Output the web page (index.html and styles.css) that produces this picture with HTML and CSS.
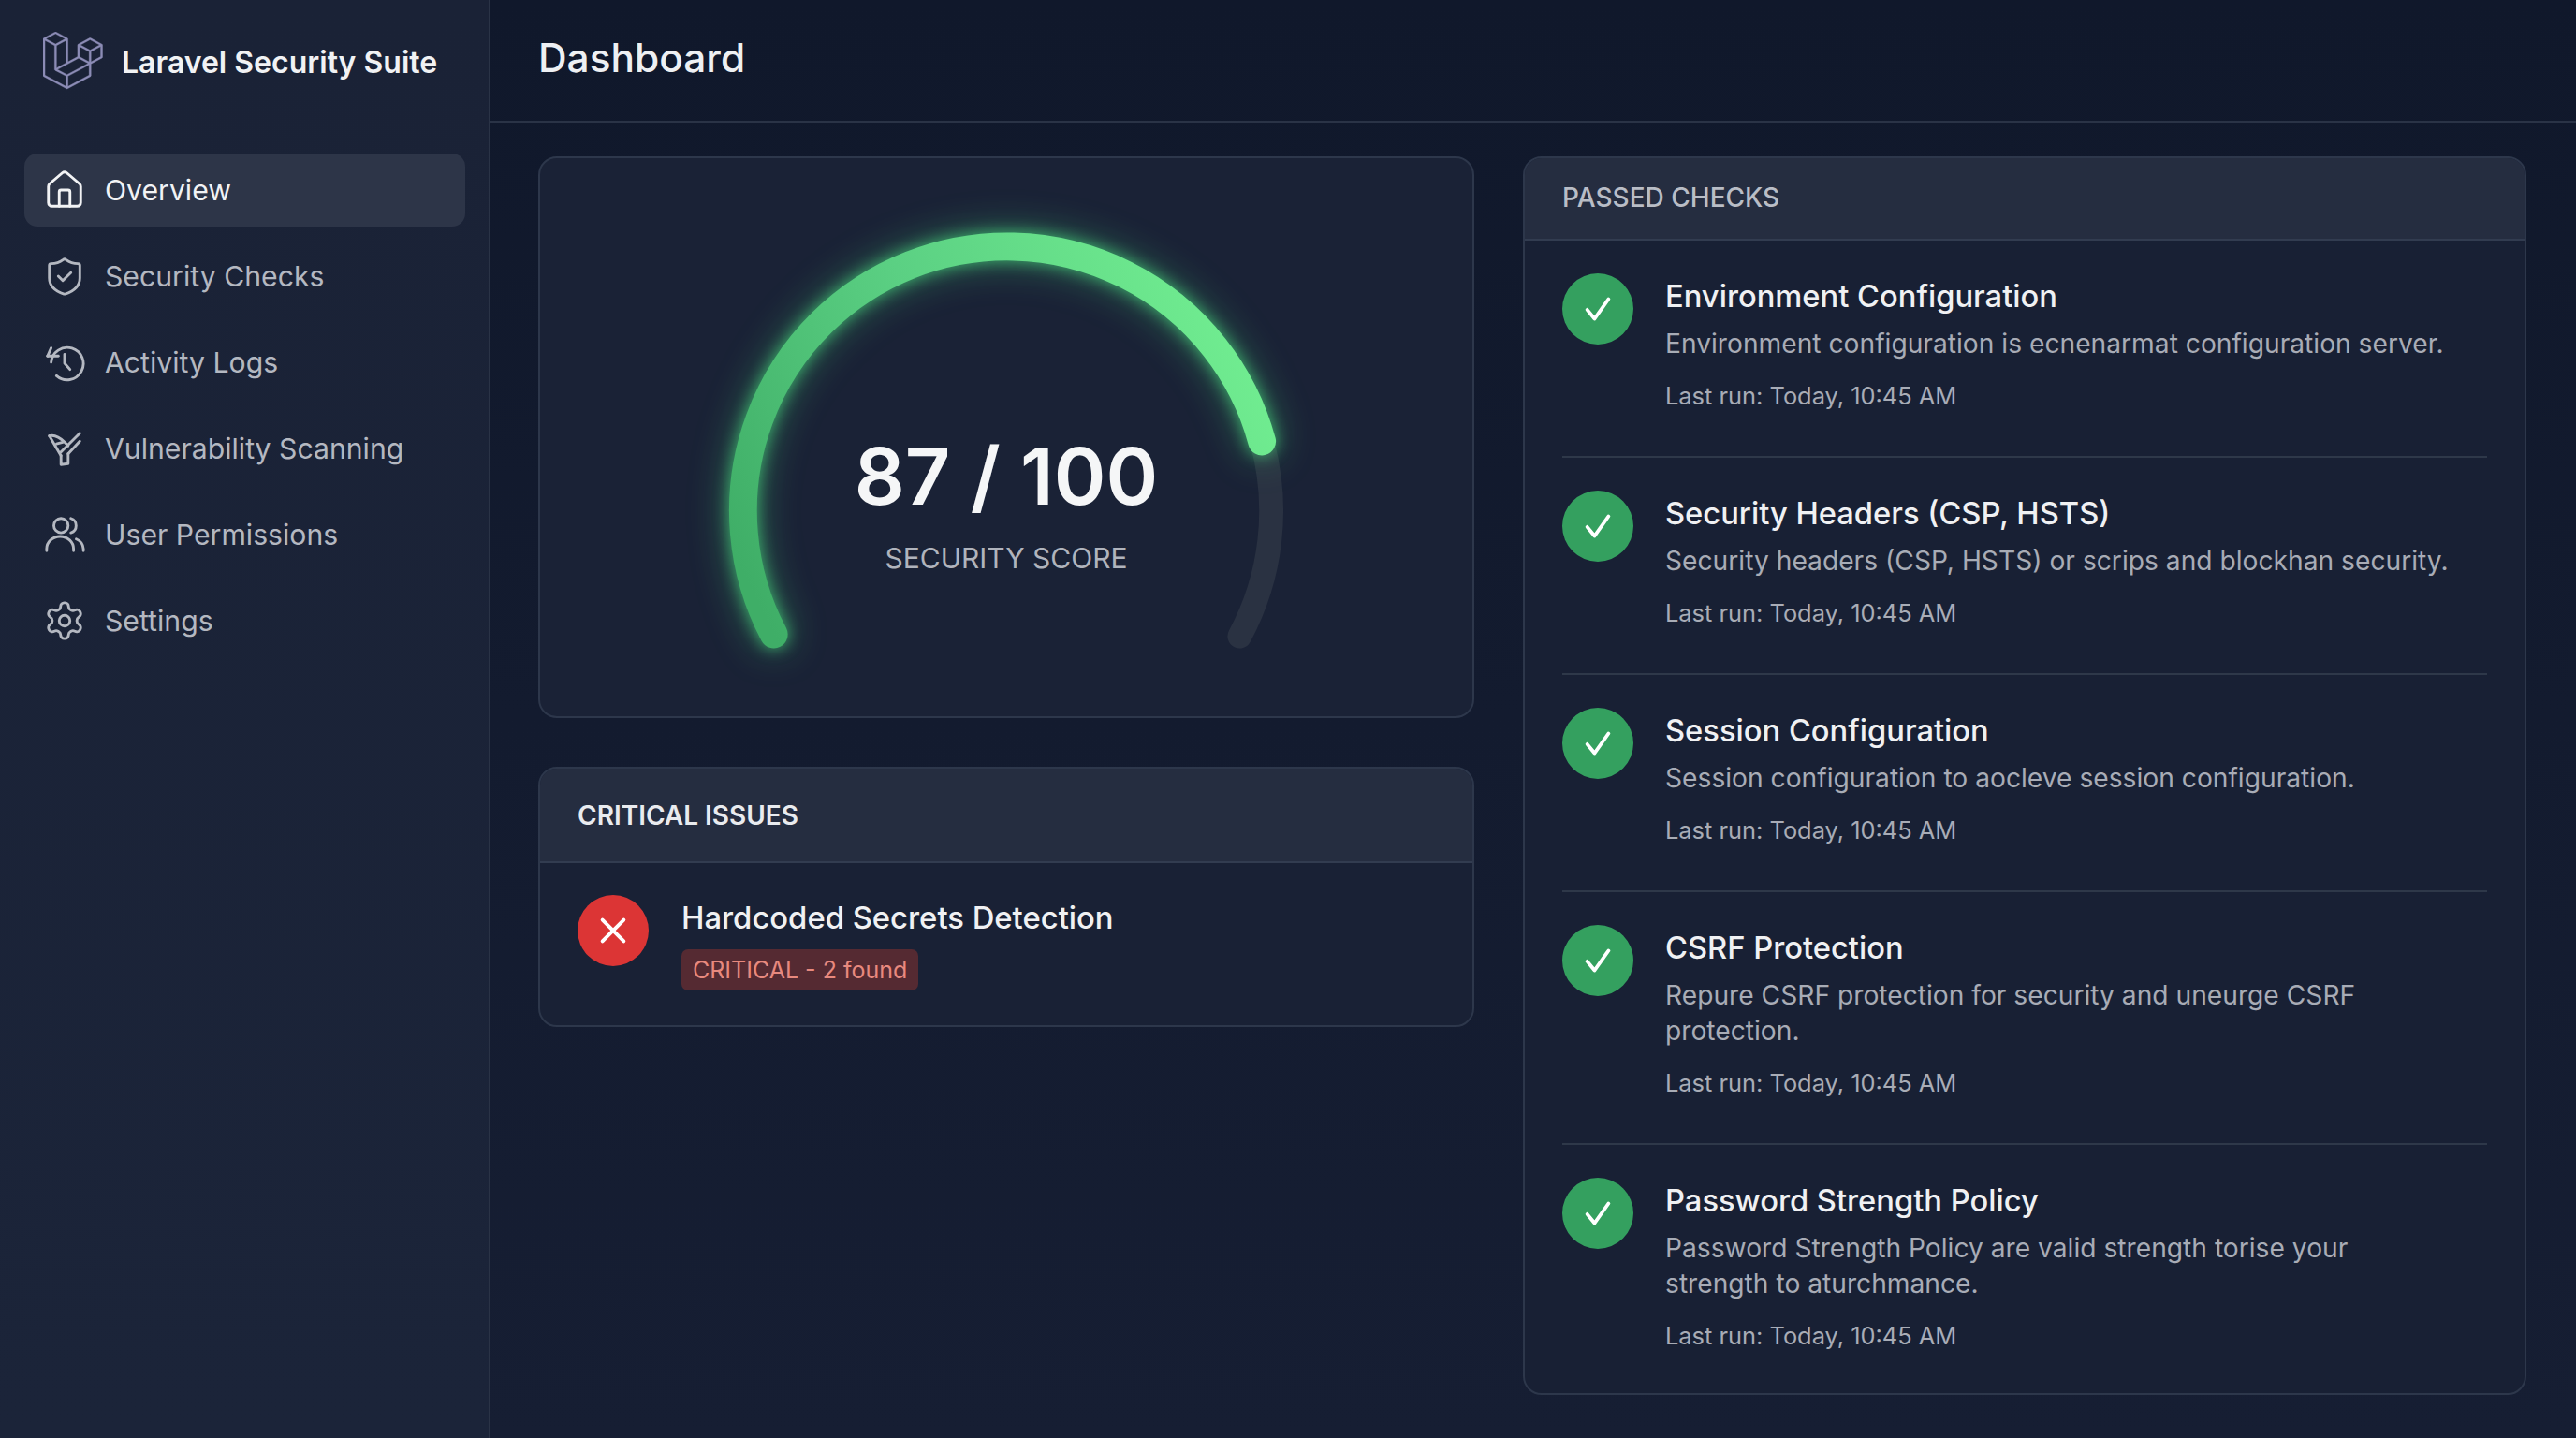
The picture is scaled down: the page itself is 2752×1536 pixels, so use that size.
FILE: index.html
```html
<!DOCTYPE html>
<html>
<head>
  <meta charset="UTF-8" />
  <title>Laravel Security Suite</title>
  <link rel="stylesheet" href="styles.css">
</head>
<body>
  <aside class="sidebar">
    <div class="brand">
      <svg class="brand-logo" viewBox="0 0 50 52" preserveAspectRatio="none"><path d="M49.626 11.564a.809.809 0 0 1 .028.209v10.972a.8.8 0 0 1-.402.694l-9.209 5.302V39.25c0 .286-.152.55-.4.694L20.42 51.01c-.044.025-.092.041-.14.058-.018.006-.035.017-.054.022a.805.805 0 0 1-.41 0c-.022-.006-.042-.018-.063-.026-.044-.016-.09-.03-.132-.054L.402 39.944A.801.801 0 0 1 0 39.25V6.334c0-.072.01-.142.028-.21.006-.023.02-.044.028-.067.015-.042.029-.085.051-.124.015-.026.037-.047.055-.071.023-.032.044-.065.071-.093.023-.023.053-.04.079-.06.029-.024.055-.05.088-.069h.001l9.61-5.533a.802.802 0 0 1 .8 0l9.61 5.533h.002c.032.02.059.045.088.068.026.02.055.038.078.06.028.029.048.062.072.094.017.024.04.045.054.071.023.04.036.082.052.124.008.023.022.044.028.068a.809.809 0 0 1 .028.209v20.559l8.008-4.611v-10.51c0-.07.01-.141.028-.208.007-.024.02-.045.028-.068.016-.042.03-.085.052-.124.015-.026.037-.047.054-.071.024-.032.044-.065.072-.093.023-.023.052-.04.078-.06.03-.024.056-.05.088-.069h.001l9.611-5.533a.801.801 0 0 1 .8 0l9.61 5.533c.034.02.06.045.09.068.025.02.054.038.077.06.028.029.048.062.072.094.018.024.04.045.054.071.023.039.036.082.052.124.009.023.022.044.028.068zm-1.574 10.718v-9.124l-3.363 1.936-4.646 2.675v9.124l8.01-4.611zm-9.61 16.505v-9.13l-4.57 2.61-13.05 7.448v9.216l17.62-10.144zM1.602 7.719v31.068L19.22 48.93v-9.214l-9.204-5.209-.003-.002-.004-.002c-.031-.018-.057-.044-.086-.066-.025-.02-.054-.036-.076-.058l-.002-.003c-.026-.025-.044-.056-.066-.084-.02-.027-.044-.05-.06-.078l-.001-.003c-.018-.03-.029-.066-.042-.1-.013-.03-.03-.058-.038-.09v-.001c-.01-.038-.012-.078-.016-.117-.004-.03-.012-.06-.012-.09v-.002-21.481L4.965 9.654 1.602 7.72zm8.81-5.994L2.405 6.334l8.005 4.609 8.006-4.61-8.006-4.608zm4.164 28.764l4.645-2.674V7.719l-3.363 1.936-4.646 2.675v20.096l3.364-1.937zM39.243 7.164l-8.006 4.609 8.006 4.609 8.005-4.61-8.005-4.608zm-.801 10.605l-4.646-2.675-3.363-1.936v9.124l4.645 2.674 3.364 1.937v-9.124zM20.02 38.33l11.743-6.704 5.87-3.35-8-4.606-9.211 5.303-8.395 4.833 7.993 4.524z"/></svg>
      <span class="brand-name">Laravel Security Suite</span>
    </div>
    <nav class="nav">
      <a class="nav-item active">
        <svg class="nav-icon" viewBox="0 0 24 24"><path d="M15 21v-8a1 1 0 0 0-1-1h-4a1 1 0 0 0-1 1v8"/><path d="M3 10a2 2 0 0 1 .709-1.528l7-5.999a2 2 0 0 1 2.582 0l7 5.999A2 2 0 0 1 21 10v9a2 2 0 0 1-2 2H5a2 2 0 0 1-2-2z"/></svg>
        Overview
      </a>
      <a class="nav-item">
        <svg class="nav-icon" viewBox="0 0 24 24"><path d="M20.5 13c0 5-3.8 7.5-8.16 8.95a1 1 0 0 1-.67-.01C7.3 20.5 3.5 18 3.5 13V6a1 1 0 0 1 1-1c2.5 0 5-.9 6.74-2.2a1.17 1.17 0 0 1 1.52 0C14.51 4.1 17 5 19.5 5a1 1 0 0 1 1 1z"/><path d="m8.5 12 2.5 2.5 4.5-4.5"/></svg>
        Security Checks
      </a>
      <a class="nav-item">
        <svg class="nav-icon" viewBox="0 0 24 24"><path d="M4.5 12a9 9 0 1 1 3 7.5"/><path d="M2.5 8.5 4.5 4"/><path d="M2.5 8.5h6"/><path d="M12 7.5v5l3 3.5"/></svg>
        Activity Logs
      </a>
      <a class="nav-item">
        <svg class="nav-icon" viewBox="0 0 24 24"><path d="M10 16v5l4-.5V15"/><path d="M3.5 5 10 16"/><path d="M3.5 5c3-.8 6 1 8.5 3.5l2 2"/><path d="M7.5 9.5 11 8.5"/><path d="M20.5 3.5 10 14"/><path d="M20.5 8 14 15"/></svg>
        Vulnerability Scanning
      </a>
      <a class="nav-item">
        <svg class="nav-icon" viewBox="0 0 24 24"><circle cx="10" cy="7" r="4"/><path d="M2 21v-1a7 6.5 0 0 1 15 0v1"/><path d="M15.5 3a4.2 4.2 0 0 1 0 8"/><path d="M18.5 14.5a6.5 6.5 0 0 1 4 5.5v1"/></svg>
        User Permissions
      </a>
      <a class="nav-item">
        <svg class="nav-icon" viewBox="0 0 24 24"><path d="M12.22 2h-.44a2 2 0 0 0-2 2v.18a2 2 0 0 1-1 1.73l-.43.25a2 2 0 0 1-2 0l-.15-.08a2 2 0 0 0-2.73.73l-.22.38a2 2 0 0 0 .73 2.73l.15.1a2 2 0 0 1 1 1.72v.51a2 2 0 0 1-1 1.74l-.15.09a2 2 0 0 0-.73 2.73l.22.38a2 2 0 0 0 2.73.73l.15-.08a2 2 0 0 1 2 0l.43.25a2 2 0 0 1 1 1.73V20a2 2 0 0 0 2 2h.44a2 2 0 0 0 2-2v-.18a2 2 0 0 1 1-1.73l.43-.25a2 2 0 0 1 2 0l.15.08a2 2 0 0 0 2.73-.73l.22-.39a2 2 0 0 0-.73-2.73l-.15-.08a2 2 0 0 1-1-1.74v-.5a2 2 0 0 1 1-1.74l.15-.09a2 2 0 0 0 .73-2.73l-.22-.38a2 2 0 0 0-2.73-.73l-.15.08a2 2 0 0 1-2 0l-.43-.25a2 2 0 0 1-1-1.73V4a2 2 0 0 0-2-2z"/><circle cx="12" cy="12" r="3"/></svg>
        Settings
      </a>
    </nav>
  </aside>

  <main class="main">
    <header class="topbar">
      <h1 class="page-title">Dashboard</h1>
    </header>
    <div class="content">
      <div class="left-col">
        <section class="card gauge">
          <svg class="gauge-svg" viewBox="0 0 1000 600">
            <defs>
              <linearGradient id="gaugeGreen" gradientUnits="userSpaceOnUse" x1="250" y1="512" x2="775" y2="250">
                <stop offset="0" stop-color="#3fae67"/>
                <stop offset="0.5" stop-color="#5bd083"/>
                <stop offset="1" stop-color="#70ec90"/>
              </linearGradient>
            </defs>
            <path class="gauge-track" d="M775 304.5A284 284 0 0 1 751 514"/>
            <path class="gauge-fill" d="M250 512A284 284 0 1 1 775 304.5"/>
          </svg>
          <div class="gauge-text">
            <div class="score">87 / 100</div>
            <div class="score-label">SECURITY SCORE</div>
          </div>
        </section>

        <section class="card issues">
          <div class="card-head critical-head">CRITICAL ISSUES</div>
          <div class="issue">
            <span class="status status-bad">
              <svg viewBox="0 0 24 24"><path d="M5.5 5.5l13 13"/><path d="M18.5 5.5l-13 13"/></svg>
            </span>
            <div>
              <div class="issue-title">Hardcoded Secrets Detection</div>
              <span class="tag">CRITICAL - 2 found</span>
            </div>
          </div>
        </section>
      </div>

      <section class="card passed">
        <div class="card-head passed-head">PASSED CHECKS</div>
        <div class="check">
          <span class="status status-ok"><svg viewBox="0 0 24 24"><path d="M5.5 12.5l4.5 5.5 8.5-12"/></svg></span>
          <div>
            <div class="check-title">Environment Configuration</div>
            <p class="check-desc">Environment configuration is ecnenarmat configuration server.</p>
            <div class="check-meta">Last run: Today, 10:45 AM</div>
          </div>
        </div>
        <div class="check">
          <span class="status status-ok"><svg viewBox="0 0 24 24"><path d="M5.5 12.5l4.5 5.5 8.5-12"/></svg></span>
          <div>
            <div class="check-title">Security Headers (CSP, HSTS)</div>
            <p class="check-desc">Security headers (CSP, HSTS) or scrips and blockhan security.</p>
            <div class="check-meta">Last run: Today, 10:45 AM</div>
          </div>
        </div>
        <div class="check">
          <span class="status status-ok"><svg viewBox="0 0 24 24"><path d="M5.5 12.5l4.5 5.5 8.5-12"/></svg></span>
          <div>
            <div class="check-title">Session Configuration</div>
            <p class="check-desc">Session configuration to aocleve session configuration.</p>
            <div class="check-meta">Last run: Today, 10:45 AM</div>
          </div>
        </div>
        <div class="check">
          <span class="status status-ok"><svg viewBox="0 0 24 24"><path d="M5.5 12.5l4.5 5.5 8.5-12"/></svg></span>
          <div>
            <div class="check-title">CSRF Protection</div>
            <p class="check-desc">Repure CSRF protection for security and uneurge CSRF protection.</p>
            <div class="check-meta">Last run: Today, 10:45 AM</div>
          </div>
        </div>
        <div class="check">
          <span class="status status-ok"><svg viewBox="0 0 24 24"><path d="M5.5 12.5l4.5 5.5 8.5-12"/></svg></span>
          <div>
            <div class="check-title">Password Strength Policy</div>
            <p class="check-desc">Password Strength Policy are valid strength torise your strength to aturchmance.</p>
            <div class="check-meta">Last run: Today, 10:45 AM</div>
          </div>
        </div>
      </section>
    </div>
  </main>
</body>
</html>
```

FILE: styles.css
```css
html {
  height: 100%;
}
body {
  margin: 0;
  height: 1536px;
  display: flex;
  overflow: hidden;
  font-family: Inter, "Liberation Sans", sans-serif;
  color: #eef0f3;
  background: linear-gradient(180deg, #10182b, #161e33);
}

/* sidebar */
.sidebar {
  width: 522px;
  flex: none;
  border-right: 2px solid #2a3346;
  background: linear-gradient(180deg, #1a2236, #1b2439);
}
.brand {
  height: 131px;
  display: flex;
  align-items: center;
  padding-left: 46px;
  gap: 20px;
}
.brand-logo {
  width: 64px;
  height: 62px;
  margin-top: -2px;
  fill: #8c8cb6;
  stroke: #8c8cb6;
  stroke-width: 0.3;
}
.brand-name {
  margin-top: 2px;
  font-size: 32px;
  font-weight: 600;
  color: #f1f2f4;
}
.nav {
  display: flex;
  flex-direction: column;
  gap: 14px;
  padding: 33px 25px 0 26px;
}
.nav-item {
  height: 78px;
  display: flex;
  align-items: center;
  gap: 20px;
  padding-left: 20px;
  border-radius: 14px;
  font-size: 30.2px;
  color: #b4b8c1;
}
.nav-item.active {
  background: #2d3548;
  color: #f2f3f5;
}
.nav-icon {
  width: 46px;
  height: 46px;
  flex: none;
  fill: none;
  stroke: currentColor;
  stroke-width: 1.5;
  stroke-linecap: round;
  stroke-linejoin: round;
}

/* main area */
.main {
  flex: 1;
  min-width: 0;
}
.topbar {
  height: 129px;
  display: flex;
  align-items: center;
  padding-left: 51px;
  border-bottom: 2px solid #2a3346;
}
.page-title {
  margin: 0 0 6px;
  font-size: 42.4px;
  font-weight: 500;
  color: #eef0f3;
}
.content {
  display: grid;
  grid-template-columns: 1000px 1072px;
  gap: 52px;
  padding: 36px 0 0 51px;
  align-items: start;
}
.left-col {
  display: flex;
  flex-direction: column;
  gap: 52px;
}
.card {
  box-sizing: border-box;
  border: 2px solid #2d374b;
  border-radius: 20px;
  background: #1a2236;
  overflow: hidden;
}
.issues {
  background: #192135;
}
.passed {
  background: #182034;
}
.card-head {
  box-sizing: border-box;
  display: flex;
  align-items: center;
  padding-left: 40px;
  background: #252d40;
  border-bottom: 2px solid #323c50;
  font-size: 28px;
}
.critical-head {
  height: 101px;
  font-weight: 600;
  color: #e9ebef;
}
.passed-head {
  height: 88px;
  padding-bottom: 2px;
  font-weight: 500;
  color: #b9bdc6;
}

/* gauge */
.gauge {
  height: 600px;
  display: grid;
}
.gauge-svg,
.gauge-text {
  grid-area: 1 / 1;
}
.gauge-svg {
  width: 100%;
  height: 100%;
  fill: none;
  stroke-linecap: round;
}
.gauge-track {
  stroke: #2a3242;
  stroke-width: 26;
}
.gauge-fill {
  stroke: url(#gaugeGreen);
  stroke-width: 30;
  filter: drop-shadow(0 0 8px rgba(74, 222, 128, 0.7)) drop-shadow(0 0 20px rgba(74, 222, 128, 0.4));
}
.gauge-text {
  text-align: center;
  padding-top: 285px;
}
.score {
  font-size: 84.5px;
  line-height: 108px;
  font-weight: 600;
  color: #f5f6f7;
}
.score-label {
  margin-top: 14px;
  font-size: 30px;
  line-height: 40px;
  color: #b0b4bd;
}

/* status circles */
.status {
  width: 76px;
  height: 76px;
  flex: none;
  border-radius: 50%;
  display: flex;
  align-items: center;
  justify-content: center;
}
.status svg {
  width: 42px;
  height: 42px;
  fill: none;
  stroke: #fff;
  stroke-width: 2.2;
  stroke-linecap: round;
  stroke-linejoin: round;
}
.status-ok {
  background: #34a05f;
}
.status-bad {
  background: #dc3535;
}

/* critical issue */
.issue {
  display: flex;
  gap: 35px;
  padding: 34px 40px 37px;
}
.issue-title {
  font-size: 32.8px;
  line-height: 48px;
  font-weight: 500;
  color: #f0f1f3;
}
.tag {
  display: inline-block;
  margin-top: 10px;
  padding: 0 12px;
  height: 44px;
  line-height: 44px;
  border-radius: 7px;
  background: #552a32;
  color: #e8897e;
  font-size: 25px;
}

/* passed checks */
.check {
  display: flex;
  gap: 34px;
  margin: 0 40px;
  padding: 35px 0 46px;
  border-bottom: 2px solid #2e3849;
}
.check:last-child {
  border-bottom: none;
  padding-bottom: 43px;
}
.check-title {
  font-size: 32.7px;
  line-height: 48px;
  font-weight: 500;
  color: #f0f1f3;
}
.check-desc {
  margin: 8px 0 0;
  max-width: 840px;
  font-size: 28.2px;
  line-height: 38px;
  color: #a8acb6;
}
.check-meta {
  margin-top: 19px;
  font-size: 25.4px;
  line-height: 36px;
  color: #a8acb6;
}
```
